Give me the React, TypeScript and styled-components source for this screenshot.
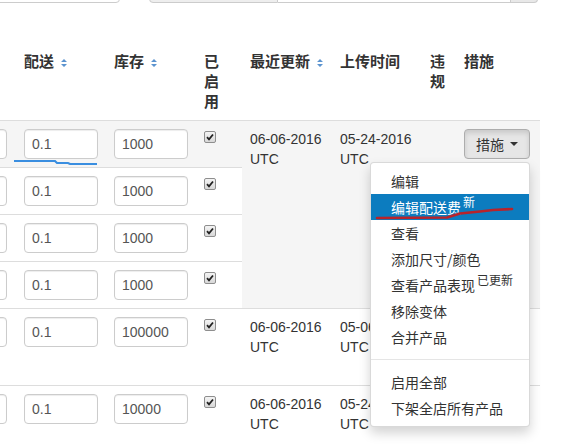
import React from "react";
import styled, { createGlobalStyle } from "styled-components";

const GlobalStyle = createGlobalStyle`
  html, body {
    margin: 0;
    padding: 0;
    background: #fff;
  }
  body {
    font-family: "Liberation Sans", "Noto Sans CJK SC", sans-serif;
    font-size: 14px;
    line-height: 20px;
    color: #333;
    overflow: hidden;
  }
`;

const Page = styled.div`
  position: relative;
  width: 575px;
  height: 445px;
  overflow: hidden;
`;

const Toolbar = styled.div`
  display: flex;
  align-items: flex-end;
  height: 34px;
  margin: -31px 0 41px -20px;
`;

const SearchBox = styled.div`
  width: 140px;
  height: 34px;
  box-sizing: border-box;
  border: 1px solid #ccc;
  border-radius: 4px;
`;

const InputGroup = styled.div`
  display: flex;
  height: 34px;
  margin-left: 29px;
`;

const Addon = styled.div`
  width: 129px;
  box-sizing: border-box;
  background: #eee;
  border: 1px solid #ccc;
  border-radius: 4px 0 0 4px;
`;

const GroupField = styled.div`
  width: 233px;
  box-sizing: border-box;
  border: 1px solid #ccc;
  border-left: 0;
`;

const GroupButton = styled.div`
  width: 27px;
  box-sizing: border-box;
  background: #e8e8e8;
  border: 1px solid #ccc;
  border-left: 0;
  border-radius: 0 4px 4px 0;
`;

const Table = styled.div`
  width: 615px;
  margin-left: -75px;
`;

const HeaderRow = styled.div`
  display: flex;
  border-bottom: 1px solid #ddd;
`;

const HeadCell = styled.div<{ $w: number }>`
  width: ${(p) => p.$w}px;
  flex: none;
  box-sizing: border-box;
  padding: 8px;
  display: flex;
  align-items: flex-start;
  font-size: 15px;
  font-weight: bold;
  line-height: 20px;
  color: #333;
`;

const HeadLabel = styled.span<{ $narrow?: boolean }>`
  display: block;
  width: ${(p) => (p.$narrow ? "1em" : "auto")};
  white-space: ${(p) => (p.$narrow ? "normal" : "nowrap")};
`;

const SortMark = styled.svg`
  flex: none;
  margin: 6px 0 0 7px;
`;

const Group = styled.div<{ $bg?: string; $minHeight?: number }>`
  display: flex;
  background: ${(p) => p.$bg || "#fff"};
  border-bottom: 1px solid #ddd;
  min-height: ${(p) => (p.$minHeight ? `${p.$minHeight}px` : "0")};
`;

const VariantList = styled.div`
  display: flex;
  flex-direction: column;
  width: 317px;
  flex: none;
`;

const VariantRow = styled.div<{ $white?: boolean }>`
  display: flex;
  height: 46px;
  background: ${(p) => (p.$white ? "#fff" : "transparent")};
  &:not(:last-child) {
    border-bottom: 1px solid #ddd;
  }
`;

const Cell = styled.div<{ $w: number }>`
  width: ${(p) => p.$w}px;
  flex: none;
  box-sizing: border-box;
  padding: 8px;
`;

const TextInput = styled.input`
  display: block;
  width: 74px;
  height: 30px;
  box-sizing: border-box;
  margin: 0;
  padding: 0 7px;
  border: 1px solid #ccc;
  border-radius: 4px;
  background: #fff;
  box-shadow: inset 0 1px 1px rgba(0, 0, 0, 0.075);
  font-family: "Liberation Sans", sans-serif;
  font-size: 14px;
  color: #555;
  outline: none;
`;

const CheckBox = styled.span`
  display: flex;
  align-items: center;
  justify-content: center;
  width: 12px;
  height: 12px;
  box-sizing: border-box;
  margin-top: 2px;
  border: 1px solid #8e8e8e;
  border-radius: 2px;
  background: linear-gradient(#f4f4f4, #d8d8d8);
`;

const DateLine = styled.div`
  white-space: nowrap;
  color: #333;
`;

const ActionWrap = styled.div`
  position: relative;
  display: inline-block;
`;

const ActionButton = styled.div<{ $open?: boolean }>`
  display: inline-flex;
  align-items: center;
  height: 30px;
  box-sizing: border-box;
  padding: 0 11px;
  border: 1px solid ${(p) => (p.$open ? "#adadad" : "#ccc")};
  border-radius: 4px;
  background: ${(p) => (p.$open ? "#e6e6e6" : "#fff")};
  box-shadow: ${(p) => (p.$open ? "inset 0 3px 5px rgba(0,0,0,0.125)" : "none")};
  font-family: "Noto Sans CJK SC", sans-serif;
  font-size: 14px;
  color: #333;
  white-space: nowrap;
`;

const Caret = styled.span`
  width: 0;
  height: 0;
  margin-left: 6px;
  border-top: 4px solid #333;
  border-left: 4px solid transparent;
  border-right: 4px solid transparent;
`;

const Menu = styled.div`
  position: absolute;
  top: 100%;
  right: 0;
  z-index: 10;
  width: 160px;
  margin-top: 3px;
  padding: 5px 0;
  box-sizing: border-box;
  background: #fff;
  border: 1px solid rgba(0, 0, 0, 0.15);
  border-radius: 4px;
  box-shadow: 0 6px 12px rgba(0, 0, 0, 0.175);
`;

const MenuItem = styled.div<{ $active?: boolean }>`
  padding: 3px 20px;
  line-height: 20px;
  font-family: "Noto Sans CJK SC", sans-serif;
  font-size: 14px;
  white-space: nowrap;
  color: ${(p) => (p.$active ? "#fff" : "#333")};
  background: ${(p) => (p.$active ? "#0c7cbf" : "transparent")};
`;

const Tag = styled.span`
  margin-left: 2px;
  font-size: 12px;
  line-height: 0;
  vertical-align: 6px;
`;

const Divider = styled.div`
  height: 1px;
  margin: 9px 0;
  background: #e5e5e5;
`;

const Annotations = styled.svg`
  position: absolute;
  left: 0;
  top: 0;
  z-index: 20;
  pointer-events: none;
`;

const Sort = () => (
  <SortMark width="6" height="10" viewBox="0 0 6 10">
    <path d="M0 4 L3 1 L6 4 Z M0 6 L3 9 L6 6 Z" fill="#5b93cf" />
  </SortMark>
);

const Check = () => (
  <CheckBox>
    <svg width="8" height="8" viewBox="0 0 8 8">
      <path d="M1 4.2 L3 6.3 L7 1.5" fill="none" stroke="#222" strokeWidth="1.8" />
    </svg>
  </CheckBox>
);

const widths = { price: 91, ship: 90, stock: 90, on: 46, updated: 90, uploaded: 90, flag: 34, action: 84 };

const VariantCells = ({ stock }: { stock: string }) => (
  <>
    <Cell $w={widths.price}>
      <TextInput defaultValue="9.99" />
    </Cell>
    <Cell $w={widths.ship}>
      <TextInput defaultValue="0.1" />
    </Cell>
    <Cell $w={widths.stock}>
      <TextInput defaultValue={stock} />
    </Cell>
    <Cell $w={widths.on}>
      <Check />
    </Cell>
  </>
);

const Dates = ({ updated, uploaded }: { updated: string; uploaded: string }) => (
  <>
    <Cell $w={widths.updated}>
      <DateLine>{updated}</DateLine>
      <DateLine>UTC</DateLine>
    </Cell>
    <Cell $w={widths.uploaded}>
      <DateLine>{uploaded}</DateLine>
      <DateLine>UTC</DateLine>
    </Cell>
    <Cell $w={widths.flag} />
  </>
);

function ActionMenu() {
  return (
    <Menu>
      <MenuItem>编辑</MenuItem>
      <MenuItem $active>
        编辑配送费<Tag>新</Tag>
      </MenuItem>
      <MenuItem>查看</MenuItem>
      <MenuItem>添加尺寸/颜色</MenuItem>
      <MenuItem>
        查看产品表现<Tag>已更新</Tag>
      </MenuItem>
      <MenuItem>移除变体</MenuItem>
      <MenuItem>合并产品</MenuItem>
      <Divider />
      <MenuItem>启用全部</MenuItem>
      <MenuItem>下架全店所有产品</MenuItem>
    </Menu>
  );
}

function Action({ open }: { open?: boolean }) {
  return (
    <Cell $w={widths.action}>
      <ActionWrap>
        <ActionButton $open={open}>
          措施<Caret />
        </ActionButton>
        {open && <ActionMenu />}
      </ActionWrap>
    </Cell>
  );
}

export default function App() {
  return (
    <Page>
      <GlobalStyle />
      <Toolbar>
        <SearchBox />
        <InputGroup>
          <Addon />
          <GroupField />
          <GroupButton />
        </InputGroup>
      </Toolbar>

      <Table>
        <HeaderRow>
          <HeadCell $w={widths.price} />
          <HeadCell $w={widths.ship}>
            <HeadLabel>配送</HeadLabel>
            <Sort />
          </HeadCell>
          <HeadCell $w={widths.stock}>
            <HeadLabel>库存</HeadLabel>
            <Sort />
          </HeadCell>
          <HeadCell $w={widths.on}>
            <HeadLabel $narrow>已启用</HeadLabel>
          </HeadCell>
          <HeadCell $w={widths.updated}>
            <HeadLabel>最近更新</HeadLabel>
            <Sort />
          </HeadCell>
          <HeadCell $w={widths.uploaded}>
            <HeadLabel>上传时间</HeadLabel>
          </HeadCell>
          <HeadCell $w={widths.flag}>
            <HeadLabel $narrow>违规</HeadLabel>
          </HeadCell>
          <HeadCell $w={widths.action}>
            <HeadLabel>措施</HeadLabel>
          </HeadCell>
        </HeaderRow>

        <Group $bg="#f5f5f5">
          <VariantList>
            <VariantRow>
              <VariantCells stock="1000" />
            </VariantRow>
            <VariantRow $white>
              <VariantCells stock="1000" />
            </VariantRow>
            <VariantRow $white>
              <VariantCells stock="1000" />
            </VariantRow>
            <VariantRow $white>
              <VariantCells stock="1000" />
            </VariantRow>
          </VariantList>
          <Dates updated="06-06-2016" uploaded="05-24-2016" />
          <Action open />
        </Group>

        <Group $minHeight={76}>
          <VariantCells stock="100000" />
          <Dates updated="06-06-2016" uploaded="05-06-2016" />
          <Action />
        </Group>

        <Group $minHeight={76}>
          <VariantCells stock="10000" />
          <Dates updated="06-06-2016" uploaded="05-24-2016" />
          <Action />
        </Group>
      </Table>

      <Annotations width="575" height="445" viewBox="0 0 575 445">
        <path
          d="M14 161 L55 161 L57 163 L68 163 L70 164 L97 164"
          fill="none"
          stroke="#3a8ee0"
          strokeWidth="2.2"
        />
        <path
          d="M377 218 L447 217.5 Q452 216 460 213.5 L480 211.5 L493 210 L512 209"
          fill="none"
          stroke="#b8232b"
          strokeWidth="2.6"
          strokeLinecap="round"
        />
      </Annotations>
    </Page>
  );
}
